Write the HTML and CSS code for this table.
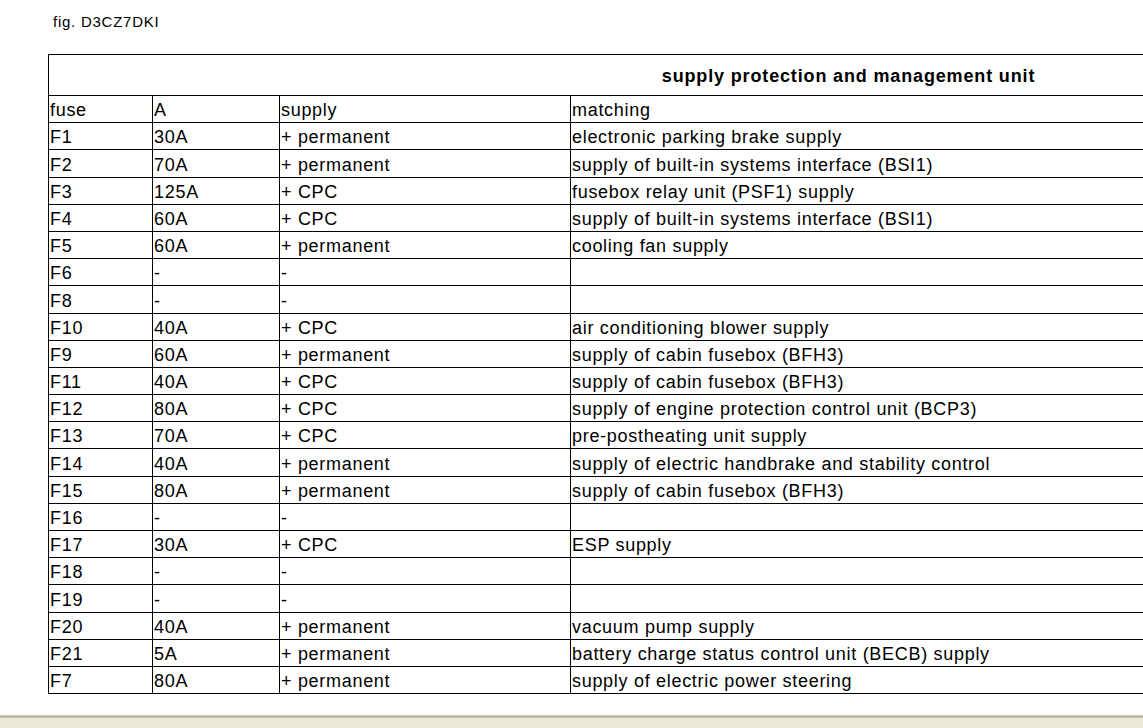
FILE: index.html
```html
<!DOCTYPE html>
<html>
<head>
<meta charset="utf-8">
<title>fig. D3CZ7DKI</title>
<link rel="stylesheet" href="styles.css">
</head>
<body>
<div class="page">
  <p class="fig">fig. D3CZ7DKI</p>
  <table class="fuses">
    <colgroup>
      <col class="c-fuse"><col class="c-amp"><col class="c-supply"><col class="c-match">
    </colgroup>
    <tr class="title-row"><th colspan="4">supply protection and management unit</th></tr>
    <tr><td>fuse</td><td>A</td><td>supply</td><td>matching</td></tr>
    <tr><td>F1</td><td>30A</td><td>+ permanent</td><td>electronic parking brake supply</td></tr>
    <tr><td>F2</td><td>70A</td><td>+ permanent</td><td>supply of built-in systems interface (BSI1)</td></tr>
    <tr><td>F3</td><td>125A</td><td>+ CPC</td><td>fusebox relay unit (PSF1) supply</td></tr>
    <tr><td>F4</td><td>60A</td><td>+ CPC</td><td>supply of built-in systems interface (BSI1)</td></tr>
    <tr><td>F5</td><td>60A</td><td>+ permanent</td><td>cooling fan supply</td></tr>
    <tr><td>F6</td><td>-</td><td>-</td><td></td></tr>
    <tr><td>F8</td><td>-</td><td>-</td><td></td></tr>
    <tr><td>F10</td><td>40A</td><td>+ CPC</td><td>air conditioning blower supply</td></tr>
    <tr><td>F9</td><td>60A</td><td>+ permanent</td><td>supply of cabin fusebox (BFH3)</td></tr>
    <tr><td>F11</td><td>40A</td><td>+ CPC</td><td>supply of cabin fusebox (BFH3)</td></tr>
    <tr><td>F12</td><td>80A</td><td>+ CPC</td><td>supply of engine protection control unit (BCP3)</td></tr>
    <tr><td>F13</td><td>70A</td><td>+ CPC</td><td>pre-postheating unit supply</td></tr>
    <tr><td>F14</td><td>40A</td><td>+ permanent</td><td>supply of electric handbrake and stability control</td></tr>
    <tr><td>F15</td><td>80A</td><td>+ permanent</td><td>supply of cabin fusebox (BFH3)</td></tr>
    <tr><td>F16</td><td>-</td><td>-</td><td></td></tr>
    <tr><td>F17</td><td>30A</td><td>+ CPC</td><td>ESP supply</td></tr>
    <tr><td>F18</td><td>-</td><td>-</td><td></td></tr>
    <tr><td>F19</td><td>-</td><td>-</td><td></td></tr>
    <tr><td>F20</td><td>40A</td><td>+ permanent</td><td>vacuum pump supply</td></tr>
    <tr><td>F21</td><td>5A</td><td>+ permanent</td><td>battery charge status control unit (BECB) supply</td></tr>
    <tr><td>F7</td><td>80A</td><td>+ permanent</td><td>supply of electric power steering</td></tr>
  </table>
</div>
<div class="hscroll"></div>
</body>
</html>
```
FILE: styles.css
```css
html, body {
  margin: 0;
  padding: 0;
  overflow: hidden;
  background: #ffffff;
  color: #000000;
  font-family: "Liberation Sans", Arial, sans-serif;
}
.page {
  padding: 13px 0 0 48px;
}
.fig {
  margin: 0 0 0 5px;
  font-size: 15px;
  letter-spacing: 0.75px;
  line-height: 17px;
}
.fuses {
  margin-top: 24px;
  border-collapse: collapse;
  table-layout: fixed;
  width: 1600px;
  font-size: 18px;
  letter-spacing: 0.7px;
}
.c-fuse { width: 104px; }
.c-amp { width: 127px; }
.c-supply { width: 291px; }
.c-match { width: 1078px; }
.fuses td, .fuses th {
  border: 1px solid #000;
  padding: 0 0 1px 1px;
  white-space: nowrap;
  vertical-align: bottom;
  text-align: left;
  font-weight: normal;
  height: 25.2px;
  line-height: 21px;
}
.fuses .title-row th {
  height: 38px;
  vertical-align: middle;
  text-align: center;
  font-weight: bold;
  letter-spacing: 0.85px;
  padding: 2px 0 0 0;
}
.hscroll {
  position: fixed;
  left: 0;
  right: 0;
  top: 714px;
  height: 14px;
  background: #ece9d8;
  border-top: 1px solid #f3f1e6;
  box-shadow: inset 0 1px 0 #d8d4c4, inset 0 2px 0 #a9a794, inset 0 3px 0 #cdcab9;
}
```
